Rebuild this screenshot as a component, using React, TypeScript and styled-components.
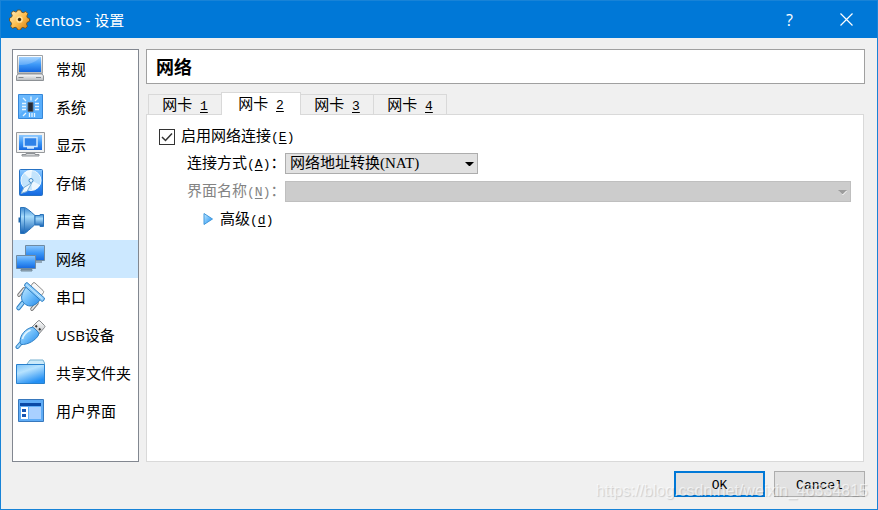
import React, { useState } from "react";
import styled, { createGlobalStyle } from "styled-components";

const uiFont = `"Noto Sans", "Noto Sans CJK SC", sans-serif`;
const formFont = `"Noto Sans CJK SC", sans-serif`;

const GlobalStyle = createGlobalStyle`
  * { box-sizing: border-box; }
  body { margin: 0; background: #f0f0f0; color: #000; font: 15px/20px ${formFont}; }
  button, select, input { font: inherit; color: inherit; margin: 0; }
`;

const Window = styled.div`
  position: relative;
  display: flex;
  flex-direction: column;
  min-height: 100vh;
  border: 1px solid #1883d7;
  background: #f0f0f0;
`;

const TitleBar = styled.header`
  display: flex;
  align-items: center;
  height: 37px;
  padding-left: 8px;
  background: #0078d7;
  color: #fff;
`;

const Title = styled.h1`
  flex: 1;
  margin: 0 0 0 5px;
  font: 15px/20px ${uiFont};
`;

const CaptionGroup = styled.div`
  display: flex;
  padding-right: 2px;
`;

const CaptionButton = styled.button`
  display: grid;
  place-items: center;
  width: 57px;
  height: 37px;
  padding: 0;
  border: 0;
  background: transparent;
  color: #fff;
  font: 16px/20px "Open Sans", sans-serif;
`;

const Content = styled.div`
  flex: 1;
  display: flex;
  gap: 7px;
  padding: 11px 12px 0 11px;
`;

const Sidebar = styled.nav`
  flex: none;
  width: 127px;
  border: 1px solid #828790;
  background: #fff;
`;

const NavItem = styled.button<{ $selected: boolean }>`
  display: flex;
  align-items: center;
  gap: 9px;
  width: 100%;
  height: 38px;
  padding: 0 0 0 2px;
  border: 0;
  background: ${(p) => (p.$selected ? "#cce8ff" : "transparent")};
  font: 15px/20px "Open Sans", ${formFont};
  text-align: left;
  white-space: nowrap;
`;

const Main = styled.main`
  flex: 1;
  min-width: 0;
  display: flex;
  flex-direction: column;
`;

const Heading = styled.h2`
  margin: 0 0 8px;
  padding: 6px 9px 7px;
  border: 1px solid #a0a0a0;
  background: #fff;
  font: bold 18px/20px ${formFont};
`;

const TabList = styled.div`
  display: flex;
  align-items: flex-end;
  height: 23px;
  padding-left: 2px;
  margin-bottom: -1px;
`;

const Tab = styled.button<{ $active: boolean }>`
  z-index: ${(p) => (p.$active ? 1 : 0)};
  height: ${(p) => (p.$active ? 23 : 21)}px;
  width: ${(p) => (p.$active ? 80 : 74)}px;
  margin-right: -1px;
  padding: 0;
  border: 1px solid #d9d9d9;
  border-bottom: ${(p) => (p.$active ? "0" : "1px solid #d9d9d9")};
  background: ${(p) => (p.$active ? "#fff" : "#f0f0f0")};
  line-height: 18px;
  white-space: pre;
`;

const Panel = styled.section`
  flex: 1;
  display: flex;
  flex-direction: column;
  gap: 7px;
  margin-right: 1px;
  padding: 12px;
  border: 1px solid #d9d9d9;
  background: #fff;
`;

const CheckRow = styled.label`
  display: flex;
  align-items: center;
  gap: 6px;
  height: 19px;
`;

const CheckBox = styled.span`
  display: grid;
  width: 16px;
  height: 16px;
  > * { grid-area: 1 / 1; }
  svg { pointer-events: none; visibility: hidden; }
  input:checked + svg { visibility: visible; }
`;

const CheckInput = styled.input`
  appearance: none;
  width: 16px;
  height: 16px;
  border: 1px solid #333;
  background: #fff;
`;

const Field = styled.div<{ $disabled?: boolean }>`
  display: flex;
  align-items: center;
  height: 21px;
  padding-left: 28px;
  color: ${(p) => (p.$disabled ? "#838383" : "#000")};
`;

const FieldLabel = styled.label`
  flex: none;
  width: 98px;
  white-space: nowrap;
`;

const Combo = styled.div<{ $fill?: boolean }>`
  display: grid;
  align-items: center;
  ${(p) => (p.$fill ? "flex: 1;" : "width: 193px;")}
  > * { grid-area: 1 / 1; }
  svg { justify-self: end; margin-right: 4px; pointer-events: none; }
`;

const Select = styled.select`
  appearance: none;
  width: 100%;
  height: 21px;
  padding: 0 20px 0 4px;
  border: 1px solid #adadad;
  border-radius: 0;
  background: #e1e1e1;
  font: 15px/19px "Liberation Serif", ${formFont};
  &:disabled { background: #ccc; border-color: #bfbfbf; opacity: 1; }
`;

const Disclosure = styled.button`
  align-self: flex-start;
  display: flex;
  align-items: center;
  gap: 6px;
  height: 20px;
  margin-left: 44px;
  padding: 0;
  border: 0;
  background: transparent;
`;

const Latin = styled.span`
  font-family: "Liberation Mono", monospace;
  font-size: 13px;
`;

const Key = styled.u`
  text-underline-offset: 2px;
`;

const Footer = styled.footer`
  display: flex;
  justify-content: flex-end;
  gap: 9px;
  padding: 9px 12px 12px;
`;

const DialogButton = styled.button<{ $primary?: boolean }>`
  width: 91px;
  height: 26px;
  padding: 0;
  border: ${(p) => (p.$primary ? "2px solid #0078d7" : "1px solid #adadad")};
  background: #e1e1e1;
`;

const Watermark = styled.div`
  position: absolute;
  right: 9px;
  bottom: 8px;
  color: rgba(255, 255, 255, 0.6);
  text-shadow: 1px 1px 1px rgba(0, 0, 0, 0.15);
  font: 16px/20px "Liberation Sans", sans-serif;
  pointer-events: none;
`;

const GradientSheet = styled.svg`
  display: block;
  width: 0;
  height: 0;
`;

const Gradients = () => (
  <GradientSheet aria-hidden="true">
    <defs>
      <linearGradient id="screen" x1="0" y1="0" x2="0" y2="1">
        <stop offset="0" stopColor="#8cc8ff" />
        <stop offset="0.5" stopColor="#3d98f7" />
        <stop offset="1" stopColor="#1468e0" />
      </linearGradient>
      <linearGradient id="sky" x1="0" y1="0" x2="1" y2="1">
        <stop offset="0" stopColor="#c4eaff" />
        <stop offset="0.5" stopColor="#6cbcfa" />
        <stop offset="1" stopColor="#2286e8" />
      </linearGradient>
      <linearGradient id="metal" x1="0" y1="0" x2="0" y2="1">
        <stop offset="0" stopColor="#fff" />
        <stop offset="1" stopColor="#b4b8bc" />
      </linearGradient>
      <linearGradient id="cone" x1="0" y1="0" x2="0" y2="1">
        <stop offset="0" stopColor="#3c88d0" />
        <stop offset="0.35" stopColor="#a8dcfc" />
        <stop offset="1" stopColor="#1360b4" />
      </linearGradient>
      <linearGradient id="folder" x1="0" y1="0" x2="0.5" y2="1">
        <stop offset="0" stopColor="#7cc4fa" />
        <stop offset="0.4" stopColor="#b6e2fe" />
        <stop offset="1" stopColor="#2490f4" />
      </linearGradient>
      <linearGradient id="gold" x1="0" y1="0" x2="1" y2="1">
        <stop offset="0" stopColor="#ffefc4" />
        <stop offset="0.5" stopColor="#fdbe4e" />
        <stop offset="1" stopColor="#d47a0c" />
      </linearGradient>
    </defs>
  </GradientSheet>
);

const Icon = ({ children }: { children: React.ReactNode }) => (
  <svg width="32" height="32" viewBox="0 0 32 32" aria-hidden="true">
    {children}
  </svg>
);

const GearIcon = () => (
  <svg width="21" height="21" viewBox="0 0 20 20" aria-hidden="true">
    <path
      d="M8 1h3l1 2 1.5.6L16 2.4l2 2-1 2.4.5 1.5 2 .8v2.6l-2.2 1-.6 1.5.9 2.3-2 2-2.4-1-1.4.6-.8 1.9H8.400l-1-2-1.600-.6-2.300 1-2-2 1-2.300-.6-1.500L.5 11.500V8.700l2-1 .6-1.500-1-2.300 2-2 2.300 1L7.500 2.500z"
      fill="url(#gold)" stroke="#6f4a14" strokeWidth=".8"
    />
    <circle cx="10" cy="10" r="3.200" fill="#ffdf96" />
    <circle cx="10" cy="10" r="1.600" fill="#3c2608" />
  </svg>
);

const GeneralIcon = () => (
  <Icon>
    <path d="M2.500 2.500h25v18h-25z" fill="url(#metal)" stroke="#9da1a5" />
    <path d="M4 4h22v15H4z" fill="url(#screen)" />
    <path d="M4 4h22Q16 13 4 12z" fill="#fff" opacity=".2" />
    <path d="M3 21h24l1.500 2v4.500h-27V23z" fill="url(#metal)" stroke="#8d9195" />
    <path d="M3.500 24.500h5M21 24.500h5" stroke="#84898e" />
  </Icon>
);

const SystemIcon = () => (
  <Icon>
    <path d="M3.500 3.500h24v24h-24z" fill="#58aefc" stroke="#3687d8" />
    <path d="M4 4h23L4 24z" fill="#86c8ff" opacity=".4" />
    <path d="M13 11.500h5v9h-5z" fill="#252a34" stroke="#5b6472" strokeWidth=".8" />
    <path d="M16 5.500v4M8 7l3 3M23 7l-3 3M7 12.500h4M7 15.500h4M7 18.500h4M20 12.500h4M20 15.500h4M20 18.500h4M8 25l3-3M14.500 22v4M17 22v4M19.500 22v4" stroke="#e5f5ff" strokeWidth="1.300" />
  </Icon>
);

const DisplayIcon = () => (
  <Icon>
    <path d="M1.500 3.500h28v20h-28z" fill="#f1f2f2" stroke="#96999c" />
    <path d="M4 6h23v15H4z" fill="url(#screen)" />
    <path d="M9 8.500h13v9H9zM12 19h7" fill="#2f82e8" stroke="#cfe8ff" strokeWidth="1.500" />
    <path d="M11 24.500h9v1h4v1.500H7v-1.500h4z" fill="#d6d8da" stroke="#8d9195" />
  </Icon>
);

const StorageIcon = () => (
  <Icon>
    <rect x="4.500" y="2.500" width="23" height="26" rx="1" fill="url(#screen)" stroke="#2672c4" />
    <circle cx="16" cy="13.500" r="10" fill="#c3e4fc" stroke="#eff9ff" />
    <path d="M16 13 9 6a10 10 0 0 1 8-3zM16 13l9 5a10 10 0 0 1-8 5z" fill="#fff" opacity=".7" />
    <circle cx="16" cy="13.500" r="2" fill="#e9f7ff" stroke="#3d89c9" />
    <path d="m6 26.500 3-6 8-5-5 9z" fill="#f1f9ff" stroke="#7baed4" />
  </Icon>
);

const AudioIcon = () => (
  <Icon>
    <path d="M4.500 12.500v5" stroke="#1a64aa" strokeWidth="2" />
    <path d="M5.500 2.500h4Q12 3 20 10.500v9Q12 27 9.500 28.500h-4z" fill="url(#cone)" stroke="#2b74ba" />
    <path d="M9.500 3v25" stroke="#2f78bd" strokeWidth=".8" />
    <path d="M20 10.500h5V9.500h3.500v12H25v-1.500h-5z" fill="url(#cone)" stroke="#2b74ba" />
  </Icon>
);

const NetworkIcon = () => (
  <Icon>
    <path d="M10.500 2.500h19v15h-19z" fill="url(#screen)" stroke="#6f8aa2" />
    <path d="M17 18h10v2H17z" fill="#93a8b8" />
    <path d="M1.500 12.500h19v13h-19z" fill="url(#screen)" stroke="#6f8aa2" />
    <path d="M6 26.500h11v1.500H6z" fill="#9daeb9" stroke="#71899b" />
  </Icon>
);

const SerialIcon = () => (
  <Icon>
    <path d="m15 6 3-4q1-1 2 0l8 7.500q1 1 .5 2L26 15z" fill="#f7f7f7" stroke="#8b8b8b" />
    <path d="m9 8-5 6M22 22l-5 6" stroke="#777" strokeWidth="3.600" strokeLinecap="round" />
    <path d="m9 8-5 6M22 22l-5 6" stroke="#e8e8e8" strokeWidth="1.800" strokeLinecap="round" />
    <path d="m7.500 22-4 5" stroke="#2f80c4" strokeWidth="4.500" strokeLinecap="round" />
    <path d="m7.500 22-4 5" stroke="#9bd4fb" strokeWidth="2.500" strokeLinecap="round" />
    <path d="M11 6C7 12 5 17 8 21c3 4 8 5 11 3 3-1 5-4 7-6z" fill="url(#sky)" stroke="#2f80c4" />
    <path d="M9.500 5Q9.500 2 12 1.500L29.500 17q0 3-2.500 3.500z" fill="#8dcbfa" stroke="#2f80c4" />
    <path d="M11 3.500 27.500 18" stroke="#c9ebff" />
  </Icon>
);

const UsbIcon = () => (
  <Icon>
    <path d="m16 9 7-7q1-1 2 0l4.500 4.500q1 1 0 2L23 16z" fill="url(#metal)" stroke="#85888b" />
    <path d="m20.500 6.500 1.500 1.500M24 9.500l1.500 1.500" stroke="#333" strokeWidth="1.800" />
    <path d="m6 24-3.500 4" stroke="#2f80c4" strokeWidth="4" strokeLinecap="round" />
    <path d="m6 24-3.500 4" stroke="#9bd4fb" strokeWidth="2" strokeLinecap="round" />
    <path d="M16 8.500q2-.5 3 .5l4 4q1 1 .5 3C21 21 13 26 6 25.500 3 20 8 11 16 8.500z" fill="url(#sky)" stroke="#2f80c4" />
    <path d="M15.500 11Q9 14 7.500 20" fill="none" stroke="#e5f7ff" strokeWidth="1.500" />
  </Icon>
);

const FolderIcon = () => (
  <Icon>
    <path d="m12 7 3-4h13l1.500 3v9H12z" fill="#cceaf9" stroke="#76b1d1" />
    <path d="M1.500 7.500h28v19h-28z" fill="url(#folder)" stroke="#2880cd" />
  </Icon>
);

const InterfaceIcon = () => (
  <Icon>
    <path d="M3.500 4.500h25v22h-25z" fill="#5facf6" stroke="#3778bd" />
    <path d="M5 8h21v3H5z" fill="#0a49a6" />
    <path d="M6 12h7v12H6z" fill="#fff" />
    <path d="M14 12h12v12H14z" fill="#a9d0ff" />
    <path d="M7 14h4v3H7zM7 19h4v3H7z" fill="#1655b2" />
  </Icon>
);

const ComboArrow = ({ disabled }: { disabled?: boolean }) => (
  <svg width="9" height="6" viewBox="0 0 9 6" aria-hidden="true">
    {disabled && <path d="M1 2h8L5 6z" fill="#fff" />}
    <path d="M0 1h9L5 5H4z" fill={disabled ? "#9c9c9c" : "#000"} />
  </svg>
);

const sections = [
  { label: "常规", Picture: GeneralIcon },
  { label: "系统", Picture: SystemIcon },
  { label: "显示", Picture: DisplayIcon },
  { label: "存储", Picture: StorageIcon },
  { label: "声音", Picture: AudioIcon },
  { label: "网络", Picture: NetworkIcon },
  { label: "串口", Picture: SerialIcon },
  { label: "USB设备", Picture: UsbIcon },
  { label: "共享文件夹", Picture: FolderIcon },
  { label: "用户界面", Picture: InterfaceIcon },
];

const Mnemonic = ({ letter }: { letter: string }) => (
  <Latin>(<Key>{letter}</Key>)</Latin>
);

export default function App() {
  const [section, setSection] = useState("网络");
  const [adapter, setAdapter] = useState(2);
  return (
    <Window>
      <GlobalStyle />
      <TitleBar>
        <GearIcon />
        <Title>centos - 设置</Title>
        <CaptionGroup>
          <CaptionButton aria-label="帮助">?</CaptionButton>
          <CaptionButton aria-label="关闭">
            <svg width="13" height="13" viewBox="0 0 13 13" aria-hidden="true">
              <path d="m.5.5 12 12m0-12-12 12" stroke="#fff" strokeWidth="1.200" />
            </svg>
          </CaptionButton>
        </CaptionGroup>
      </TitleBar>
      <Gradients />
      <Content>
        <Sidebar>
          {sections.map(({ label, Picture }) => (
            <NavItem key={label} $selected={label === section} onClick={() => setSection(label)}>
              <Picture />
              {label}
            </NavItem>
          ))}
        </Sidebar>
        <Main>
          <Heading>{section}</Heading>
          <TabList role="tablist">
            {[1, 2, 3, 4].map((n) => (
              <Tab key={n} role="tab" aria-selected={n === adapter} $active={n === adapter} onClick={() => setAdapter(n)}>
                网卡<Latin> <Key>{n}</Key></Latin>
              </Tab>
            ))}
          </TabList>
          <Panel role="tabpanel">
            <CheckRow>
              <CheckBox>
                <CheckInput type="checkbox" defaultChecked />
                <svg width="16" height="16" viewBox="0 0 16 16" aria-hidden="true">
                  <path d="m3 8 3.500 3.500L13 4.500" fill="none" stroke="#333" strokeWidth="1.500" />
                </svg>
              </CheckBox>
              <span>启用网络连接<Mnemonic letter="E" /></span>
            </CheckRow>
            <Field>
              <FieldLabel htmlFor="attachment">连接方式<Mnemonic letter="A" />：</FieldLabel>
              <Combo>
                <Select id="attachment">
                  <option>网络地址转换(NAT)</option>
                </Select>
                <ComboArrow />
              </Combo>
            </Field>
            <Field $disabled>
              <FieldLabel htmlFor="interface">界面名称<Mnemonic letter="N" />：</FieldLabel>
              <Combo $fill>
                <Select id="interface" disabled />
                <ComboArrow disabled />
              </Combo>
            </Field>
            <Disclosure aria-expanded={false}>
              <svg width="11" height="14" viewBox="0 0 11 14" aria-hidden="true">
                <path d="M1 1.500 9.500 7 1 12.500z" fill="url(#sky)" stroke="#4298dc" />
              </svg>
              <span>高级<Mnemonic letter="d" /></span>
            </Disclosure>
          </Panel>
        </Main>
      </Content>
      <Footer>
        <DialogButton $primary><Latin>OK</Latin></DialogButton>
        <DialogButton><Latin>Cancel</Latin></DialogButton>
      </Footer>
      <Watermark>https://blog.csdn.net/weixin_46334815</Watermark>
    </Window>
  );
}
